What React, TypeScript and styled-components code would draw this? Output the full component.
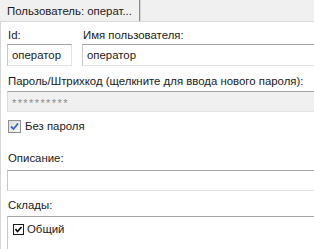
import React from 'react';
import styled, { createGlobalStyle } from 'styled-components';

const GlobalStyle = createGlobalStyle`
  html, body {
    margin: 0;
    padding: 0;
    background: #ffffff;
  }
  body {
    font-family: "Liberation Sans", Arial, sans-serif;
    font-size: 11.4px;
    color: #1a1a1a;
  }
`;

const Window = styled.div`
  width: 314px;
  height: 249px;
  overflow: hidden;
  display: flex;
  flex-direction: column;
  background: #ffffff;
`;

const TabStrip = styled.div`
  height: 21px;
  flex-shrink: 0;
  display: flex;
  background: #f0f0f0;
  border-bottom: 1px solid #dadada;
`;

const Tab = styled.div`
  width: 132px;
  padding-left: 7px;
  display: flex;
  align-items: center;
  background: #f0f0f0;
  border-right: 1px solid #8a8a8a;
  box-shadow: 1px 0 0 #d4d4d4;
  white-space: nowrap;
`;

const Body = styled.div`
  flex: 1;
  display: flex;
  flex-direction: column;
  padding: 6px 0 0 6px;
  border-left: 1px solid #d6d6d6;
`;

const Row = styled.div`
  display: grid;
  grid-template-columns: 65px 1fr;
  column-gap: 10px;
`;

const Group = styled.div<{ $mt?: number; $grow?: boolean }>`
  display: flex;
  flex-direction: column;
  margin-top: ${p => p.$mt ?? 0}px;
  flex: ${p => (p.$grow ? 1 : 'none')};
`;

const Label = styled.div<{ $gap: number }>`
  height: 14px;
  line-height: 14px;
  padding-left: 1px;
  margin-bottom: ${p => p.$gap}px;
  white-space: nowrap;
`;

const TextBox = styled.div<{ $h: number; $disabled?: boolean }>`
  height: ${p => p.$h}px;
  box-sizing: border-box;
  display: flex;
  align-items: center;
  padding-left: 4px;
  background: ${p => (p.$disabled ? '#f0f0f0' : '#ffffff')};
  color: ${p => (p.$disabled ? '#8c8c8c' : '#1a1a1a')};
  border: 1px solid #e3e3e3;
  border-top-color: #a3a3a3;
  border-left-color: ${p => (p.$disabled ? '#dcdcdc' : '#c8c8c8')};
  border-right: none;
  white-space: nowrap;
`;

const IdBox = styled(TextBox)`
  border-right: 1px solid #e3e3e3;
`;

const Stars = styled.span`
  font-size: 11px;
  letter-spacing: 1.4px;
  padding-top: 3px;
`;

const CheckRow = styled.label<{ $mt: number }>`
  display: flex;
  align-items: center;
  gap: 4px;
  height: 14px;
  margin-top: ${p => p.$mt}px;
  padding-left: 1px;
`;

const WinCheck = styled.span`
  width: 13px;
  height: 13px;
  box-sizing: border-box;
  border: 1px solid #8e8f8f;
  background: linear-gradient(135deg, #dcdcdc, #f8f8f8);
  display: flex;
  align-items: center;
  justify-content: center;
`;

const ListBox = styled.div`
  flex: 1;
  margin-top: 4px;
  border-top: 1px solid #a3a3a3;
  border-left: 1px solid #c8c8c8;
  padding: 5px 0 0 5px;
`;

const ListItem = styled.div`
  display: flex;
  align-items: center;
  gap: 3px;
  height: 14px;
`;

const ClassicCheck = styled.span`
  width: 11px;
  height: 11px;
  box-sizing: border-box;
  border: 1px solid #1a1a1a;
  background: #ffffff;
  display: flex;
  align-items: center;
  justify-content: center;
`;

export default function App() {
  return (
    <>
      <GlobalStyle />
      <Window>
        <TabStrip>
          <Tab>Пользователь: операт...</Tab>
        </TabStrip>
        <Body>
          <Row>
            <Group>
              <Label $gap={2}>Id:</Label>
              <IdBox $h={22}>оператор</IdBox>
            </Group>
            <Group>
              <Label $gap={2}>Имя пользователя:</Label>
              <TextBox $h={22}>оператор</TextBox>
            </Group>
          </Row>
          <Group $mt={8}>
            <Label $gap={3}>Пароль/Штрихкод (щелкните для ввода нового пароля):</Label>
            <TextBox $h={21} $disabled>
              <Stars>**********</Stars>
            </TextBox>
          </Group>
          <CheckRow $mt={7}>
            <WinCheck>
              <svg width="9" height="9" viewBox="0 0 9 9">
                <path d="M1 4.5 L3.5 7 L8 1.5" fill="none" stroke="#3b63c4" strokeWidth="1.8" />
              </svg>
            </WinCheck>
            Без пароля
          </CheckRow>
          <Group $mt={18}>
            <Label $gap={5}>Описание:</Label>
            <TextBox $h={21} />
          </Group>
          <Group $mt={7} $grow>
            <Label $gap={0}>Склады:</Label>
            <ListBox>
              <ListItem>
                <ClassicCheck>
                  <svg width="9" height="9" viewBox="0 0 9 9">
                    <path d="M1.5 4 L3.5 6.5 L7.5 2" fill="none" stroke="#000" strokeWidth="1.6" />
                  </svg>
                </ClassicCheck>
                Общий
              </ListItem>
            </ListBox>
          </Group>
        </Body>
      </Window>
    </>
  );
}
